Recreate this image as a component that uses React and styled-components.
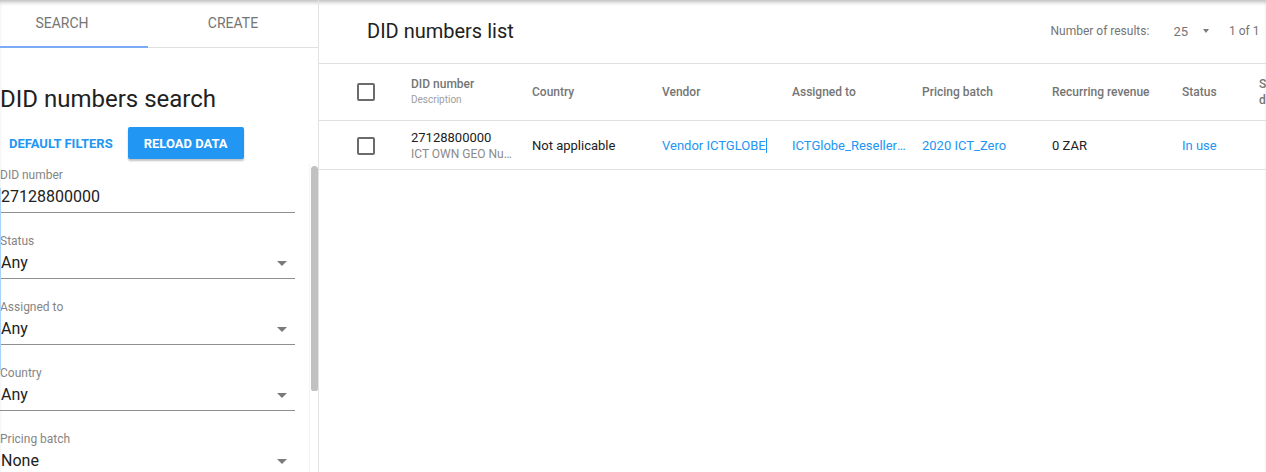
import React from "react";
import styled, { createGlobalStyle } from "styled-components";

const GlobalStyle = createGlobalStyle`
  html, body {
    margin: 0;
    padding: 0;
    height: 100%;
    overflow: hidden;
    background: #fff;
  }
  body {
    font-family: Roboto, "Liberation Sans", Arial, sans-serif;
    color: #212121;
  }
  * {
    box-sizing: border-box;
  }
`;

const filters = [
  { label: "DID number", value: "27128800000" },
  { label: "Status", value: "Any", select: true },
  { label: "Assigned to", value: "Any", select: true },
  { label: "Country", value: "Any", select: true },
  { label: "Pricing batch", value: "None", select: true },
  { label: "Vendor", value: "Any", select: true },
];

const columns = [
  { title: "DID number", sub: "Description" },
  { title: "Country" },
  { title: "Vendor" },
  { title: "Assigned to" },
  { title: "Pricing batch" },
  { title: "Recurring revenue" },
  { title: "Status" },
  { title: "Status date" },
];

const App = () => {
  return (
    <Page>
      <GlobalStyle />
      <Sidebar>
        <Tabs>
          <Tab active>Search</Tab>
          <Tab pad>Create</Tab>
          <TabIndicator />
        </Tabs>
        <SearchTitle>DID numbers search</SearchTitle>
        <ButtonRow>
          <FlatButton>Default filters</FlatButton>
          <RaisedButton>Reload data</RaisedButton>
        </ButtonRow>
        <FilterArea>
          <FilterList>
            <FocusLine />
            {filters.map((f) => (
              <Field key={f.label}>
                <FieldLabel>{f.label}</FieldLabel>
                <FieldValue>
                  <span>{f.value}</span>
                  {f.select && <Arrow />}
                </FieldValue>
              </Field>
            ))}
          </FilterList>
          <ScrollTrack>
            <ScrollThumb />
          </ScrollTrack>
        </FilterArea>
      </Sidebar>

      <Main>
        <ListHeader>
          <ListTitle>DID numbers list</ListTitle>
          <Pager>
            <span>Number of results:</span>
            <PageSize>
              25 <Arrow small />
            </PageSize>
            <PageCount>1 of 1</PageCount>
          </Pager>
        </ListHeader>

        <TableRow head>
          <CheckCell>
            <Checkbox />
          </CheckCell>
          {columns.map((c, i) => (
            <HeadCell key={c.title} first={i === 0} wrap={i === columns.length - 1}>
              <div>{c.title}</div>
              {c.sub && <HeadSub>{c.sub}</HeadSub>}
            </HeadCell>
          ))}
        </TableRow>

        <TableRow>
          <CheckCell>
            <Checkbox />
          </CheckCell>
          <Cell first>
            <div>27128800000</div>
            <CellSub>ICT OWN GEO Number range</CellSub>
          </Cell>
          <Cell>Not applicable</Cell>
          <Cell link>
            Vendor ICTGLOBE
            <Caret />
          </Cell>
          <Cell link>ICTGlobe_Reseller_Account</Cell>
          <Cell link>2020 ICT_Zero</Cell>
          <Cell>0 ZAR</Cell>
          <Cell link>In use</Cell>
          <Cell />
        </TableRow>
      </Main>
    </Page>
  );
};

export default App;

const Page = styled.div`
  display: flex;
  width: 100vw;
  height: 100vh;
  overflow: hidden;
  box-shadow: inset 0 4px 4px -2px rgba(0, 0, 0, 0.28);
`;

const Sidebar = styled.aside`
  width: 319px;
  flex-shrink: 0;
  display: flex;
  flex-direction: column;
  border-right: 1px solid #e3e3e3;
  min-height: 0;
`;

const Tabs = styled.div`
  position: relative;
  display: grid;
  grid-template-columns: 124px 1fr;
  height: 48px;
  border-bottom: 1px solid #e0e0e0;
`;

const Tab = styled.div`
  display: flex;
  align-items: center;
  justify-content: center;
  padding-left: ${(p) => (p.pad ? "24px" : "0")};
  padding-bottom: 1px;
  font-size: 14px;
  text-transform: uppercase;
  color: #757575;
`;

const TabIndicator = styled.div`
  position: absolute;
  left: 0;
  bottom: -1px;
  width: 148px;
  height: 2px;
  background: #7baaf7;
`;

const SearchTitle = styled.h2`
  margin: 35px 0 0;
  font-size: 24px;
  font-weight: 400;
  line-height: 32px;
  color: #212121;
`;

const ButtonRow = styled.div`
  display: flex;
  align-items: center;
  gap: 7px;
  margin-top: 12px;
  padding-left: 1px;
`;

const FlatButton = styled.button`
  height: 32px;
  padding: 0 8px;
  border: none;
  background: transparent;
  font-family: inherit;
  font-size: 13px;
  font-weight: 700;
  text-transform: uppercase;
  color: #2196f3;
`;

const RaisedButton = styled.button`
  height: 32px;
  padding: 0 16px;
  border: none;
  border-radius: 2px;
  background: #2196f3;
  box-shadow: 0 2px 2px rgba(0, 0, 0, 0.24);
  font-family: inherit;
  font-size: 13px;
  font-weight: 700;
  text-transform: uppercase;
  color: #fff;
`;

const FilterArea = styled.div`
  flex: 1;
  min-height: 0;
  display: flex;
  margin-top: 5px;
`;

const FilterList = styled.div`
  position: relative;
  width: 309px;
  padding: 4px 14px 0 0;
  overflow: hidden;
`;

const ScrollTrack = styled.div`
  width: 9px;
  padding: 2px 1px 0 1px;
  border-left: 1px solid #f4f4f4;
`;

const ScrollThumb = styled.div`
  width: 7px;
  height: 225px;
  border-radius: 4px 4px 3px 3px;
  background: #c1c1c1;
`;

const FocusLine = styled.div`
  position: absolute;
  left: 0;
  top: 24px;
  width: 1px;
  height: 182px;
  background: #a9d3fb;
`;

const Field = styled.div`
  margin-bottom: 21px;
`;

const FieldLabel = styled.div`
  font-size: 12px;
  line-height: 14px;
  color: #858585;
`;

const FieldValue = styled.div`
  display: flex;
  align-items: center;
  justify-content: space-between;
  margin-top: 3px;
  padding: 0 8px 3px 1px;
  border-bottom: 1px solid #8f8f8f;
  font-size: 16px;
  line-height: 24px;
  color: #212121;
`;

const Arrow = styled.span`
  display: inline-block;
  width: 0;
  height: 0;
  border-left: ${(p) => (p.small ? "3.5px" : "5px")} solid transparent;
  border-right: ${(p) => (p.small ? "3.5px" : "5px")} solid transparent;
  border-top: ${(p) => (p.small ? "4px" : "5px")} solid #7a7a7a;
`;

const Main = styled.main`
  flex: 1;
  min-width: 0;
  overflow: hidden;
`;

const ListHeader = styled.div`
  display: flex;
  align-items: center;
  justify-content: space-between;
  height: 64px;
  padding: 0 0 1px 48px;
  border-bottom: 1px solid #e0e0e0;
`;

const ListTitle = styled.h1`
  margin: 0;
  font-size: 20px;
  font-weight: 400;
  color: #212121;
`;

const Pager = styled.div`
  display: flex;
  align-items: center;
  font-size: 12px;
  color: #757575;
  white-space: nowrap;
`;

const PageSize = styled.span`
  display: flex;
  align-items: center;
  gap: 15px;
  margin-left: 24px;
  font-size: 13px;
`;

const PageCount = styled.span`
  margin-left: 20px;
  font-size: 12px;
  width: 37px;
`;

const TableRow = styled.div`
  display: grid;
  grid-template-columns: 92px 121px repeat(5, 130px) 77px 60px;
  align-items: center;
  height: ${(p) => (p.head ? "57px" : "49px")};
  padding-top: ${(p) => (p.head ? "0" : "2px")};
  border-bottom: 1px solid #e0e0e0;
`;

const CheckCell = styled.div`
  display: flex;
  padding-left: 38px;
`;

const Checkbox = styled.span`
  width: 18px;
  height: 18px;
  border: 2px solid #6b6b6b;
  border-radius: 2px;
`;

const HeadCell = styled.div`
  padding-right: ${(p) => (p.first ? "20px" : "16px")};
  font-size: 12px;
  font-weight: 500;
  line-height: 16px;
  color: #757575;
  white-space: ${(p) => (p.wrap ? "normal" : "nowrap")};
  width: ${(p) => (p.wrap ? "40px" : "auto")};
`;

const HeadSub = styled.div`
  font-size: 10px;
  font-weight: 400;
  color: #9e9e9e;
`;

const Cell = styled.div`
  min-width: 0;
  padding-right: ${(p) => (p.first ? "20px" : "14px")};
  font-size: 13px;
  line-height: 16px;
  color: ${(p) => (p.link ? "#2196f3" : "#212121")};
  white-space: nowrap;
  overflow: hidden;
  text-overflow: ellipsis;
`;

const CellSub = styled.div`
  font-size: 12px;
  color: #8a8a8a;
  overflow: hidden;
  text-overflow: ellipsis;
`;

const Caret = styled.span`
  display: inline-block;
  width: 1px;
  height: 15px;
  vertical-align: -3px;
  background: #2196f3;
`;
